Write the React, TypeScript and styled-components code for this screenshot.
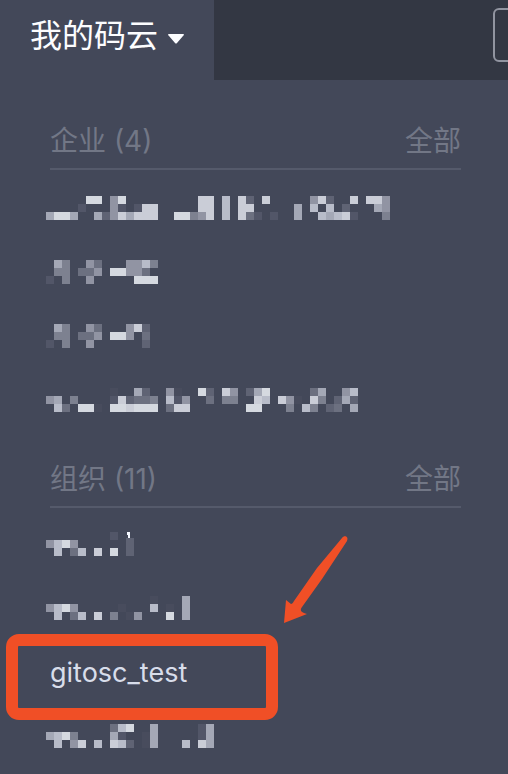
import React from "react";
import styled, { createGlobalStyle } from "styled-components";

const GlobalStyle = createGlobalStyle`
  * { box-sizing: border-box; }
  body {
    margin: 0;
    background: #434859;
    font-family: Inter, "Noto Sans CJK SC", sans-serif;
    font-weight: 400;
    overflow-x: hidden;
  }
`;

const Page = styled.div`
  min-height: 100vh;
  background: #434859;
  overflow: hidden;
`;

const Header = styled.header`
  display: flex;
  align-items: flex-start;
  justify-content: space-between;
  background: #333743;
  overflow: hidden;
`;

const MenuTab = styled.button`
  display: flex;
  align-items: center;
  gap: 10px;
  height: 80px;
  padding: 0 30px 8px;
  border: 0;
  background: #434859;
  color: #fcfdff;
  font: inherit;
  font-size: 32px;
  line-height: 48px;
  white-space: nowrap;
`;

const Caret = styled.svg`
  display: block;
  margin-top: 6px;
`;

const Search = styled.input`
  flex: none;
  width: 240px;
  height: 54px;
  margin: 8px -225px 0 0;
  padding: 0 16px;
  border: 2px solid #9194a0;
  border-radius: 6px;
  background: transparent;
  color: #fcfdff;
  font: inherit;
  font-size: 28px;
`;

const Menu = styled.nav`
  padding: 30px 47px 0 50px;
`;

const Section = styled.section`
  & + & { margin-top: 16px; }
`;

const SectionHead = styled.div`
  display: flex;
  justify-content: space-between;
  height: 60px;
  border-bottom: 2px solid #555a6b;
  font-size: 28px;
  line-height: 62px;
  color: #727786;
`;

const SectionTitle = styled.h2`
  margin: 0;
  font-size: 28px;
  font-weight: 400;
`;

const AllLink = styled.a`
  color: inherit;
  text-decoration: none;
`;

const List = styled.ul<{ $gap: number }>`
  margin: 0;
  padding: ${(p) => p.$gap}px 0 0;
  list-style: none;
`;

const Item = styled.li`
  position: relative;
  height: 64px;
`;

const ItemLink = styled.a`
  display: flex;
  align-items: center;
  height: 64px;
  color: #d8ddea;
  font-size: 27px;
  text-decoration: none;
`;

const MosaicSvg = styled.svg`
  display: block;
  flex: none;
  margin-left: -4px;
`;

const Highlight = styled.span`
  position: absolute;
  top: -6px;
  left: -44px;
  width: 272px;
  height: 86px;
  border: 12px solid #f04f26;
  border-radius: 13px;
  pointer-events: none;
`;

const Arrow = styled.svg`
  position: absolute;
  left: 232px;
  top: -106px;
  pointer-events: none;
`;

const SHADES = ["#484c5d", "#525668", "#5f6374", "#6c7080", "#7d8190", "#9194a3", "#a4a8b6", "#b8bcc9", "#cacdd7", "#d5d9e0"];

type Entry = { id: string; text?: string; rows?: string[]; tick?: boolean };

/* Each row lists "column:shade" or "first-last:shade" blocks of an 8px grid. */
function Mosaic({ rows, tick }: { rows: string[]; tick?: boolean }) {
  return (
    <MosaicSvg width="360" height="24" viewBox="0 0 360 24" shapeRendering="crispEdges" aria-hidden="true">
      {rows.flatMap((row, y) =>
        row.split(" ").filter(Boolean).map((block) => {
          const [range, shade] = block.split(":");
          const [first, last = first] = range.split("-");
          return (
            <rect
              key={`${y}-${range}`}
              x={Number(first) * 8}
              y={y * 8}
              width={(Number(last) - Number(first) + 1) * 8}
              height="8"
              fill={SHADES[Number(shade)]}
            />
          );
        })
      )}
      {tick && <path d="M81 0H84V6H82V3H81Z" fill="#f5f8ff" />}
      {tick && <rect x="80" y="6" width="8" height="2" fill={SHADES[2]} />}
    </MosaicSvg>
  );
}

const companies: Entry[] = [
  {
    id: "c1",
    rows: [
      "5-6:9 8:5 9:9 19-20:8 22:7 24:8 25:2 27:8 33:5 34:8 35:2 38:8 40-41:8 42:5",
      "4:1 8:5 9:1 11:1 12-13:8 19-20:8 22:7 24-25:8 31:6 33:7 35:7 37:2 41:6 42:5",
      "0:6 1-2:9 3:6 6:6 7:2 8:5 9:8 10:6 11-13:8 16-17:9 18:4 19:5 20:8 22:7 24:8 25:3 26:1 28:1 31:6 34:7 35:6 36:7 37:8 38:1 42:4",
    ],
  },
  {
    id: "c2",
    rows: [
      "1:6 2:4 5:5 6:3 10-11:5 12:7 13:4",
      "1-2:4 4:3 5:3 6:5 8-9:9 10-11:5 12:3",
      "0:1 2:4 5:5 11-13:9",
    ],
  },
  {
    id: "c3",
    rows: [
      "1:6 2:4 5:5 6:3 10:5 11:8 12:2",
      "1-2:4 4:3 5:3 6:5 8-9:9 10:5 12:3",
      "0:1 2:4 5:5 12:2",
    ],
  },
  {
    id: "c4",
    rows: [
      "8:0 11:6 12:2 15:5 16:0 19:9 20:2 22:8 23:5 25:2 26:6 27:9 33:3 34:6 37:5 38:7",
      "0:5 1:6 3:4 8:1 9:8 10:2 11-12:3 13:4 15:7 16:1 17:5 20:3 22:4 23:4 26:8 27:7 29:8 30:5 31:0 33:8 34:4 36:2 37:6 38:2",
      "1:7 2:3 4-5:9 6:0 8-9:9 10:8 11-13:9 15:3 16-17:8 25-26:9 30:4 32:7 33:4 35:2 36:3 38:6",
    ],
  },
];

const groups: Entry[] = [
  {
    id: "g1",
    tick: true,
    rows: ["8:1", "0:5 1:7 2:9 3:5 10:2", "1:7 3:3 4:7 6:8 8:9 10:2"],
  },
  {
    id: "g2",
    rows: [
      "13:0 17:6",
      "0:5 1:7 2:9 3:5 9:0 13:7 15:0 17:6",
      "1:7 3:3 4:7 6:8 8:4 10:0 11:5 15:9 17:6",
    ],
  },
  { id: "g3", text: "gitosc_test" },
  {
    id: "g4",
    rows: [
      "8:3 9:7 10:9 13:6 19:1 20:6",
      "0:6 1:7 2:9 3:4 8:6 9:1 12:0 13:6 19:1 20:6",
      "1:7 3:5 4:8 6:7 8:8 9:7 10:2 12:0 13:6 17:7 19:8 20:6",
    ],
  },
];

function MenuSection({ title, entries, gap }: { title: string; entries: Entry[]; gap: number }) {
  return (
    <Section>
      <SectionHead>
        <SectionTitle>{title}</SectionTitle>
        <AllLink href="#all">全部</AllLink>
      </SectionHead>
      <List $gap={gap}>
        {entries.map((entry) => (
          <Item key={entry.id}>
            <ItemLink href={`#${entry.id}`}>
              {entry.text}
              {entry.rows && <Mosaic rows={entry.rows} tick={entry.tick} />}
            </ItemLink>
            {entry.text && (
              <>
                <Highlight />
                <Arrow width="70" height="94" viewBox="0 0 70 94" aria-hidden="true">
                  <path
                    d="M2 89L4 66L9 70C10 70 11 69 12 67L35 34L60 4C62 1 67 2 65 7L40 45L20 73C18 76 18 78 25 80Z"
                    fill="#f04f26"
                  />
                </Arrow>
              </>
            )}
          </Item>
        ))}
      </List>
    </Section>
  );
}

export default function App() {
  return (
    <Page>
      <GlobalStyle />
      <Header>
        <MenuTab type="button" aria-expanded="true">
          我的码云
          <Caret width="16" height="10" viewBox="0 0 16 10" aria-hidden="true">
            <path d="M1 0H15Q17 0 15 2L9 9Q8 10 7 9L1 2Q-1 0 1 0Z" fill="#fcfdff" />
          </Caret>
        </MenuTab>
        <Search type="search" aria-label="搜索" />
      </Header>
      <Menu>
        <MenuSection title="企业 (4)" entries={companies} gap={6} />
        <MenuSection title="组织 (11)" entries={groups} gap={4} />
      </Menu>
    </Page>
  );
}
